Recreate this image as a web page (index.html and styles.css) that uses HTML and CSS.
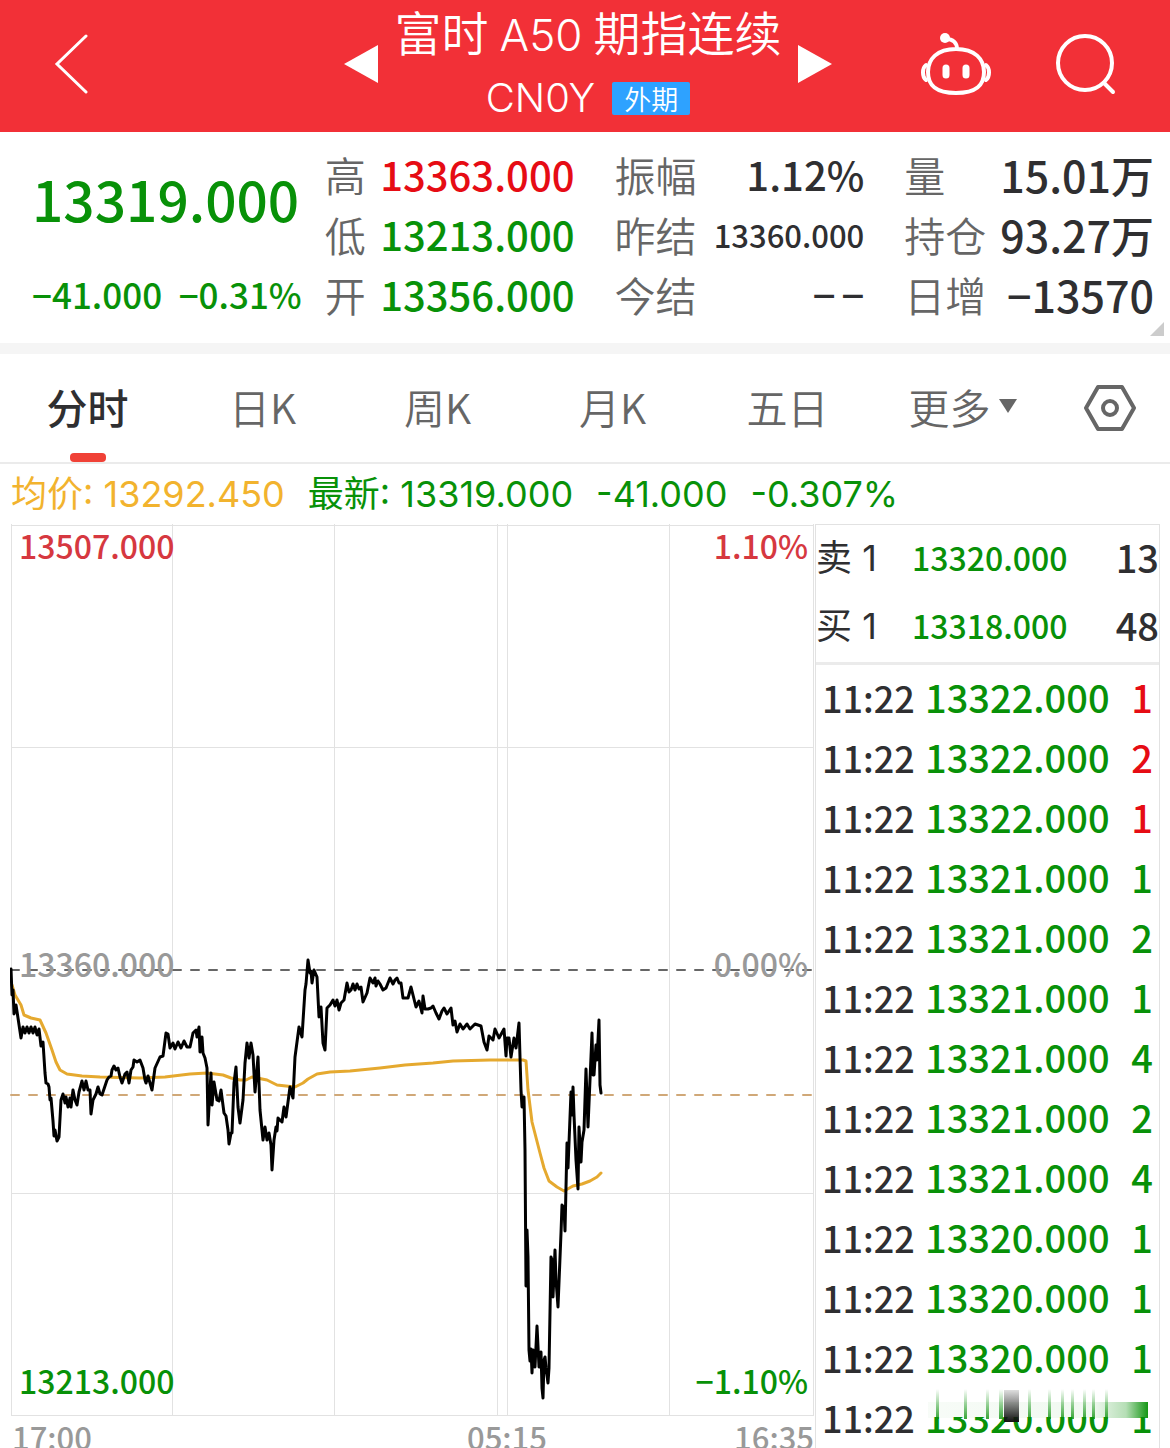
FILE: index.html
```html
<!DOCTYPE html>
<html lang="zh-CN">
<head>
<meta charset="utf-8">
<meta name="viewport" content="width=device-width, initial-scale=1">
<title>富时A50期指连续</title>
<link rel="stylesheet" href="styles.css">
</head>
<body>
<header class="topbar">
  <button class="icon-btn back" aria-label="返回"><svg width="36" height="62" viewBox="0 0 36 62"><path d="M34 3 5 31l29 28"/></svg></button>
  <div class="switcher">
    <button class="icon-btn" aria-label="上一个"><svg class="solid" width="34" height="40" viewBox="0 0 34 40"><path d="M34 1v38L0 20z"/></svg></button>
    <div class="title">
      <h1>富时<span class="latin">A50</span>期指连续</h1>
      <p class="code"><span class="latin">CN0Y</span><span class="badge">外期</span></p>
    </div>
    <button class="icon-btn" aria-label="下一个"><svg class="solid" width="34" height="40" viewBox="0 0 34 40"><path d="M0 1v38l34-19z"/></svg></button>
  </div>
  <div class="actions">
    <button class="icon-btn" aria-label="助手"><svg width="70" height="64" viewBox="0 0 70 64"><path d="M35 17C16 17 7 27 7 40s7 21 28 21 28-8 28-21-9-23-28-23zM36 17c0-6-4-10-11-10"/><path d="M5 33c-4 3-4 12 0 15M65 33c4 3 4 12 0 15"/><circle class="dot" cx="24" cy="6" r="5"/><path class="eye" d="M25 36v7M45 36v7"/></svg></button>
    <button class="icon-btn" aria-label="搜索"><svg width="62" height="62" viewBox="0 0 62 62"><circle cx="30" cy="30" r="27"/><path d="m49 50 9 9"/></svg></button>
  </div>
</header>

<section class="quote">
  <div class="last down">
    <strong>13319.000</strong>
    <div class="change"><span>−41.000</span><span>−0.31%</span></div>
  </div>
  <dl>
    <div><dt>高</dt><dd class="up">13363.000</dd></div>
    <div><dt>低</dt><dd class="down">13213.000</dd></div>
    <div><dt>开</dt><dd class="down">13356.000</dd></div>
  </dl>
  <dl class="inset">
    <div><dt>振幅</dt><dd>1.12%</dd></div>
    <div><dt>昨结</dt><dd class="compact">13360.000</dd></div>
    <div><dt>今结</dt><dd class="empty"><span>−</span><span>−</span></dd></div>
  </dl>
  <dl class="inset volume">
    <div><dt>量</dt><dd>15.01万</dd></div>
    <div><dt>持仓</dt><dd>93.27万</dd></div>
    <div><dt>日增</dt><dd>−13570</dd></div>
  </dl>
  <i class="corner"></i>
</section>

<nav class="tabs">
  <button class="tab active">分时</button>
  <button class="tab">日K</button>
  <button class="tab">周K</button>
  <button class="tab">月K</button>
  <button class="tab">五日</button>
  <button class="tab">更多<svg width="18" height="16" viewBox="0 0 18 16"><path d="M0 1h18L9 15z"/></svg></button>
  <button class="tab settings" aria-label="设置"><svg width="52" height="48" viewBox="0 0 52 48"><path d="M14 3h24l12 21-12 21H14L2 24z"/><circle cx="26" cy="24" r="7"/></svg></button>
</nav>

<p class="summary"><span class="avg">均价: 13292.450</span><span>最新: 13319.000</span><span>-41.000</span><span>-0.307%</span></p>

<main class="board">
  <section class="chart">
    <div class="plot">
      <svg viewBox="10 524 804 892" preserveAspectRatio="none">
        <path class="grid" d="M11 525H814M11 747H814M11 1193H814M11 1415H814M11 524V1416M172 524V1416M334 524V1416M497 524V1416M507 524V1416M669 524V1416M813 524V1416"/>
        <path class="base" d="M11 970H814"/>
        <path class="current" d="M11 1095H814"/>
        <path class="average" d="M12 985 15 995 21 1005 24 1015 31 1018 40 1020 46 1033 52 1050 56 1062 60 1070 67 1074 82 1076 100 1077 140 1078 165 1077 190 1074 207 1073 223 1075 231 1078 240 1080 246 1080 252 1077 267 1080 277 1085 295 1087 303 1083 308 1079 317 1074 330 1072 350 1071 380 1068 405 1065 433 1063 453 1061 490 1060 523 1060 526 1061 528 1090 532 1122 540 1153 544 1168 549 1181 557 1187 564 1191 573 1186 582 1184 590 1181 597 1177 601 1173"/>
        <path class="price" d="M11 969 12 995 13 990 14 1014 16 1005 18 1018 21 1038 23 1027 25 1033 27 1027 29 1033 31 1027 33 1033 35 1027 37 1035 39 1029 41 1046 43 1042 45 1073 46 1083 48 1084 49 1087 50 1100 51 1098 53 1121 54 1136 55 1130 57 1141 59 1137 61 1100 63 1094 65 1103 66 1097 68 1107 70 1098 71 1107 73 1090 75 1100 77 1105 79 1092 82 1081 84 1090 86 1081 88 1090 90 1090 91 1114 93 1100 96 1094 98 1087 100 1094 102 1095 107 1080 109 1077 111 1076 112 1070 114 1066 116 1070 118 1068 120 1077 122 1083 125 1074 127 1072 129 1083 131 1070 133 1067 134 1060 137 1062 140 1060 143 1068 145 1080 146 1083 148 1076 152 1090 155 1068 160 1057 163 1056 166 1033 168 1034 170 1048 173 1043 175 1049 178 1042 181 1048 184 1041 187 1047 190 1047 193 1033 196 1030 197 1037 199 1027 200 1052 202 1037 203 1053 205 1058 207 1068 208 1125 211 1073 212 1105 214 1082 217 1100 219 1101 221 1090 224 1113 226 1116 228 1130 229 1144 231 1133 232 1133 234 1083 236 1067 238 1107 240 1123 243 1100 245 1063 247 1043 249 1058 251 1043 253 1055 255 1092 258 1057 260 1110 263 1140 265 1127 267 1140 269 1133 271 1145 272 1170 274 1140 276 1127 277 1131 278 1118 282 1122 284 1107 286 1117 288 1102 290 1087 293 1098 295 1057 299 1027 302 1037 305 990 306 984 308 960 310 973 311 971 312 983 314 970 317 977 319 1017 321 1007 323 1043 325 1050 327 1008 330 1005 333 1000 335 1006 337 1000 339 1010 341 1003 344 1000 347 983 349 992 351 990 353 984 355 990 357 984 359 989 361 987 363 1002 367 993 370 978 373 983 375 978 376 986 378 981 380 984 383 990 386 988 390 978 393 984 395 980 397 978 399 983 401 983 403 998 408 998 411 987 413 995 416 1007 419 1001 422 1013 423 996 425 1009 428 1009 431 1008 433 1006 436 1013 439 1019 442 1011 444 1008 447 1014 451 1008 453 1025 455 1021 457 1032 460 1024 463 1029 467 1024 470 1029 475 1024 481 1026 484 1042 487 1050 489 1036 493 1040 495 1029 499 1038 504 1029 506 1056 507 1038 509 1038 511 1057 514 1038 516 1048 519 1023 520 1057 521 1090 522 1107 524 1097 525 1150 526 1286 527 1230 528 1257 529 1350 530 1361 531 1349 532 1373 533 1350 535 1367 537 1326 539 1367 541 1352 542 1388 543 1398 544 1360 545 1357 546 1368 548 1383 549 1368 551 1257 552 1260 553 1297 555 1250 556 1280 558 1307 561 1233 562 1205 564 1208 565 1231 567 1143 568 1168 571 1092 572 1115 573 1087 574 1115 576 1160 578 1189 579 1127 581 1162 582 1142 584 1130 586 1069 588 1127 590 1080 592 1033 593 1075 594 1075 596 1045 597 1060 599 1020 600 1085 601 1093"/>
      </svg>
      <div class="scale">
        <p class="high"><span>13507.000</span><span>1.10%</span></p>
        <p class="mid"><span>13360.000</span><span>0.00%</span></p>
        <p class="down"><span>13213.000</span><span>−1.10%</span></p>
      </div>
    </div>
    <div class="axis"><span>17:00</span><p><span>05:15</span><span>16:35</span></p></div>
  </section>

  <section class="book">
    <table class="depth">
      <tr><th scope="row">卖<span class="latin"> 1</span></th><td class="down">13320.000</td><td class="qty">13</td></tr>
      <tr><th scope="row">买<span class="latin"> 1</span></th><td class="down">13318.000</td><td class="qty">48</td></tr>
    </table>
    <div class="trades">
      <table class="ticks">
        <tr><td>11:22</td><td class="down">13322.000</td><td class="up">1</td></tr>
        <tr><td>11:22</td><td class="down">13322.000</td><td class="up">2</td></tr>
        <tr><td>11:22</td><td class="down">13322.000</td><td class="up">1</td></tr>
        <tr><td>11:22</td><td class="down">13321.000</td><td class="down">1</td></tr>
        <tr><td>11:22</td><td class="down">13321.000</td><td class="down">2</td></tr>
        <tr><td>11:22</td><td class="down">13321.000</td><td class="down">1</td></tr>
        <tr><td>11:22</td><td class="down">13321.000</td><td class="down">4</td></tr>
        <tr><td>11:22</td><td class="down">13321.000</td><td class="down">2</td></tr>
        <tr><td>11:22</td><td class="down">13321.000</td><td class="down">4</td></tr>
        <tr><td>11:22</td><td class="down">13320.000</td><td class="down">1</td></tr>
        <tr><td>11:22</td><td class="down">13320.000</td><td class="down">1</td></tr>
        <tr><td>11:22</td><td class="down">13320.000</td><td class="down">1</td></tr>
        <tr><td>11:22</td><td class="down">13320.000</td><td class="down">1</td></tr>
      </table>
      <svg class="smear" width="224" height="60" viewBox="924 1388 224 60" aria-hidden="true">
        <defs>
          <linearGradient id="fall" x1="0" y1="0" x2="0" y2="1"><stop offset="0" stop-color="#089108" stop-opacity="0"/><stop offset="1" stop-color="#089108" stop-opacity=".8"/></linearGradient>
          <linearGradient id="side"><stop offset="0" stop-color="#089108" stop-opacity=".03"/><stop offset=".75" stop-color="#089108" stop-opacity=".06"/><stop offset=".9" stop-color="#089108" stop-opacity=".3"/><stop offset="1" stop-color="#089108" stop-opacity=".95"/></linearGradient>
          <linearGradient id="block" x1="0" y1="0" x2="0" y2="1"><stop offset="0" stop-color="#222" stop-opacity=".15"/><stop offset="1" stop-color="#111"/></linearGradient>
        </defs>
        <path fill="#fff" d="M924 1396h224v22H924z"/>
        <path fill="url(#fall)" d="M934 1390h3v30h-3zM962 1390h3v30h-3zM984 1390h3v30h-3zM997 1390h4v30h-4zM1026 1390h3v30h-3zM1046 1390h3v30h-3zM1059 1390h3v30h-3zM1069 1390h3v30h-3zM1081 1390h3v30h-3zM1090 1390h3v30h-3zM1103 1390h3v30h-3z"/>
        <path fill="url(#side)" d="M926 1403h220v16H926z"/>
        <path fill="url(#block)" d="M1002 1391h15v32h-15z"/>
      </svg>
    </div>
  </section>
</main>
</body>
</html>
```
FILE: styles.css
```css
* { box-sizing: border-box; }

body {
  margin: 0;
  background: #fff;
  color: #2f2f31;
  font-family: "Noto Sans CJK SC", sans-serif;
  font-weight: 400;
}

h1, p, dl, dd { margin: 0; }

button {
  border: 0;
  padding: 0;
  background: none;
  color: inherit;
  font: inherit;
}

svg { display: block; }

.latin { font-family: Inter, "Noto Sans CJK SC", sans-serif; }
.up { color: #e60c14; }
.down { color: #089108; }

/* Title bar */
.topbar {
  display: grid;
  grid-template-columns: 1fr 488px 1fr;
  align-items: center;
  height: 132px;
  padding: 0 0 4px 6px;
  background: #f23037;
  color: #fff;
}
.icon-btn svg {
  fill: none;
  stroke: #fff;
  stroke-width: 4;
  stroke-linecap: round;
}
.icon-btn .solid { fill: #fff; stroke: none; }
.icon-btn .dot { fill: #fff; stroke: none; }
.icon-btn .eye { stroke-width: 7; }
.back { padding-left: 46px; justify-self: start; }
.back svg { stroke-width: 3; }
.switcher {
  display: flex;
  align-items: center;
  justify-content: space-between;
}
.title { text-align: center; }
.title h1 {
  font-size: 47px;
  line-height: 62px;
  font-weight: 350;
  white-space: nowrap;
}
.title h1 .latin {
  margin: 0 11px;
  font-size: 44px;
  line-height: 44px;
  font-weight: 300;
}
.code {
  display: flex;
  align-items: center;
  justify-content: center;
  gap: 17px;
  padding-top: 6px;
  font-size: 40px;
  line-height: 60px;
  font-weight: 300;
}
.badge {
  padding: 0 12px;
  border-radius: 2px;
  background: #2ea2ff;
  font-size: 27px;
  line-height: 33px;
  font-weight: 350;
}
.actions {
  display: flex;
  align-items: center;
  justify-content: flex-end;
  gap: 64px;
  padding-right: 53px;
}

/* Quote figures */
.quote {
  position: relative;
  display: grid;
  grid-template-columns: 270fr 250fr 267fr 267fr;
  column-gap: 23px;
  padding: 12px 16px 19px 32px;
  border-bottom: 11px solid #f5f5f5;
  font-weight: 500;
}
.last strong {
  display: block;
  font-size: 55px;
  line-height: 108px;
  font-weight: 500;
}
.change {
  display: flex;
  justify-content: space-between;
  margin-top: 12px;
  font-size: 35px;
  line-height: 60px;
}
.inset { padding-left: 17px; }
.quote dl div {
  display: flex;
  align-items: center;
  justify-content: space-between;
  height: 60px;
  font-size: 41px;
  white-space: nowrap;
}
.quote dt { color: #666; font-weight: 350; }
.quote dd { font-size: 40px; }
.quote .compact { font-size: 31px; }
.volume dd { font-size: 43px; }
.empty { display: flex; gap: 6px; }
.corner {
  position: absolute;
  right: 6px;
  bottom: 7px;
  border-left: 14px solid transparent;
  border-bottom: 14px solid #ccc;
}

/* Period tabs */
.tabs {
  display: grid;
  grid-template-columns: repeat(6, 175fr) 120fr;
  height: 110px;
  border-bottom: 2px solid #ebebeb;
}
.tab {
  position: relative;
  display: flex;
  align-items: center;
  justify-content: center;
  gap: 8px;
  padding-bottom: 4px;
  color: #666;
  font-size: 41px;
  font-weight: 350;
}
.tab svg { fill: #666; }
.tab.active { color: #2f2f31; font-weight: 500; }
.tab.active::after {
  content: "";
  position: absolute;
  bottom: 0;
  width: 36px;
  height: 9px;
  border-radius: 4px;
  background: #f04137;
}
.tab.settings { padding-bottom: 0; }
.settings svg {
  fill: none;
  stroke: #666;
  stroke-width: 4;
  stroke-linejoin: round;
}

.summary {
  display: flex;
  gap: 23px;
  padding-left: 11px;
  color: #089108;
  font-family: Inter, "Noto Sans CJK SC", sans-serif;
  font-size: 36px;
  line-height: 60px;
  white-space: nowrap;
}
.avg { color: #f2b32e; }

/* Chart and order book */
.board {
  display: grid;
  grid-template-columns: 804fr 346fr;
  padding: 0 10px;
}
.plot { display: grid; }
.plot > * { grid-area: 1 / 1; }
.plot svg {
  width: 100%;
  height: 892px;
  fill: none;
  stroke-linejoin: round;
  stroke-linecap: round;
}
.plot path { vector-effect: non-scaling-stroke; }
.grid { stroke: #e2e2e2; stroke-width: 1; shape-rendering: crispEdges; }
.base { stroke: #666; stroke-width: 2; stroke-dasharray: 8 10; }
.current { stroke: #d0a878; stroke-width: 2; stroke-dasharray: 8 10; }
.average { stroke: #e5a92f; stroke-width: 3; }
.price { stroke: #000; stroke-width: 3; }
.scale {
  display: flex;
  flex-direction: column;
  justify-content: space-between;
  padding: 1px 6px 16px 9px;
  font-size: 32px;
  line-height: 40px;
  font-weight: 500;
}
.scale p { display: flex; justify-content: space-between; }
.high { color: #d63840; }
.mid { color: #999; }
.axis {
  display: flex;
  height: 32px;
  padding-left: 2px;
  overflow: hidden;
  color: #999;
  font-size: 31px;
  line-height: 42px;
  font-weight: 500;
}
.axis > span { flex: 455 0 0; }
.axis p { display: flex; flex: 347 0 0; justify-content: space-between; }

.book {
  margin-left: 1px;
  border: 1px solid #e2e2e2;
  border-bottom: 0;
}
.book table {
  width: 100%;
  border-collapse: collapse;
  table-layout: fixed;
}
.book td, .book th { padding: 0; white-space: nowrap; }
.depth { border-bottom: 3px solid #ebebeb; }
.depth tr { height: 69px; }
.depth th {
  width: 96px;
  font-size: 36px;
  line-height: 40px;
  font-weight: 400;
  text-align: left;
}
.book .depth td, .book .depth th { padding-bottom: 6px; }
.depth td { font-size: 32px; line-height: 40px; font-weight: 500; }
.depth .qty { width: 80px; font-size: 38px; text-align: right; }
.trades { position: relative; padding: 2px 6px 0; }
.ticks tr { height: 60px; }
.ticks td { font-size: 38px; line-height: 40px; font-weight: 500; }
.ticks td:first-child { width: 103px; font-size: 36px; }
.ticks td:last-child { width: 40px; text-align: right; }
.smear { position: absolute; right: 9px; bottom: 0; }
```
